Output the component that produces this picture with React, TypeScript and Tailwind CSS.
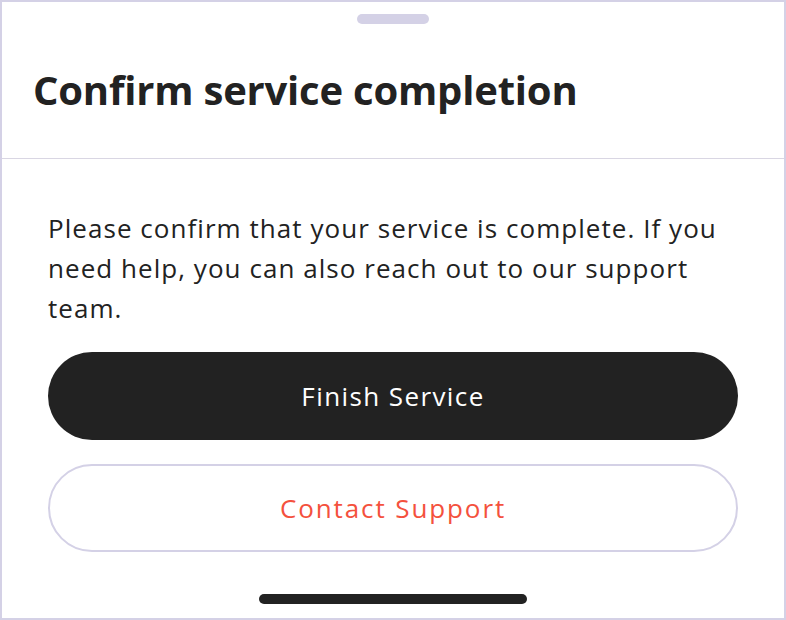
export default function App() {
  return (
    <div className="w-[786px] h-[620px] bg-white border-2 border-[#d4d1e6] flex flex-col font-['Open_Sans',sans-serif] text-[#222222]">
      <div className="flex justify-center pt-3">
        <div className="w-[72px] h-[10px] rounded-full bg-[#d4d1e6]" />
      </div>
      <div className="h-[135px] flex items-center px-[31px] border-b border-[#d9d6e3]">
        <h1 className="text-[40px] font-bold leading-none tracking-[-0.2px] mt-[-2px]">Confirm service completion</h1>
      </div>
      <div className="px-[46px] pt-[49px]">
        <p className="text-[26px] leading-[40px] tracking-[1.05px]">
          Please confirm that your service is complete. If you need help, you can also reach out to our support team.
        </p>
        <div className="mt-[24px] flex flex-col gap-6">
          <button className="h-[88px] rounded-full bg-[#222222] text-white text-[26px] font-medium tracking-[1.4px]">Finish Service</button>
          <button className="h-[88px] rounded-full border-2 border-[#d4d1e6] text-[#f4513d] text-[26px] font-medium tracking-[1.9px]">Contact Support</button>
        </div>
      </div>
      <div className="flex justify-center mt-[42px]">
        <div className="w-[268px] h-[10px] rounded-full bg-[#222222]" />
      </div>
    </div>
  )
}
